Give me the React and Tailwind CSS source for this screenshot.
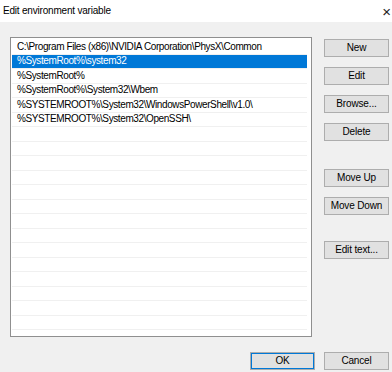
import React from "react";

const items = [
  "C:\\Program Files (x86)\\NVIDIA Corporation\\PhysX\\Common",
  "%SystemRoot%\\system32",
  "%SystemRoot%",
  "%SystemRoot%\\System32\\Wbem",
  "%SYSTEMROOT%\\System32\\WindowsPowerShell\\v1.0\\",
  "%SYSTEMROOT%\\System32\\OpenSSH\\",
];

function Btn({ children, className = "" }) {
  return (
    <button
      className={`h-[18px] w-[65px] shrink-0 border border-[#adadad] bg-[#e1e1e1] text-[10px] tracking-[-0.15px] leading-none text-black ${className}`}
    >
      {children}
    </button>
  );
}

export default function App() {
  // pad the list with empty rows so it fills the box like the real dialog
  const rows = [...items, ...Array(15).fill("")];

  return (
    <div className="w-[392px] h-[372px] overflow-hidden bg-[#f0f0f0] font-['Liberation_Sans',Arial,sans-serif]">
      {/* Title bar */}
      <div className="h-[22px] bg-white flex items-center justify-between pl-[3px] pr-[1px]">
        <span className="text-[10px] tracking-[-0.2px] text-black leading-none">Edit environment variable</span>
        <span className="text-[15px] text-[#222] leading-none">×</span>
      </div>

      {/* Body */}
      <div className="flex">
        {/* List */}
        <div className="ml-[10px] mt-[15px] w-[302px] h-[300px] border border-[#8f8f8f] bg-white pt-[2px] pl-[1px] pr-[4px] overflow-hidden">
          {rows.map((r, i) => (
            <div
              key={i}
              className={`h-[14.5px] flex items-center pl-[5px] text-[10px] tracking-[-0.4px] leading-none border-b border-[#f0f0f0] whitespace-nowrap ${
                i === 1 ? "bg-[#0078d7] text-white border-[#0078d7]" : "text-black"
              }`}
            >
              {r}
            </div>
          ))}
        </div>

        {/* Buttons */}
        <div className="ml-[12px] mt-[17px] flex flex-col">
          <Btn>New</Btn>
          <Btn className="mt-[10px]">Edit</Btn>
          <Btn className="mt-[10px]">Browse...</Btn>
          <Btn className="mt-[10px]">Delete</Btn>
          <Btn className="mt-[28px]">Move Up</Btn>
          <Btn className="mt-[10px]">Move Down</Btn>
          <Btn className="mt-[26px]">Edit text...</Btn>
        </div>
      </div>

      {/* Footer */}
      <div className="mt-[15px] flex justify-end gap-[9px] pr-[3px]">
        <Btn className="border-[#0078d7] shadow-[inset_0_0_0_1px_#0078d7]">OK</Btn>
        <Btn>Cancel</Btn>
      </div>
    </div>
  );
}
